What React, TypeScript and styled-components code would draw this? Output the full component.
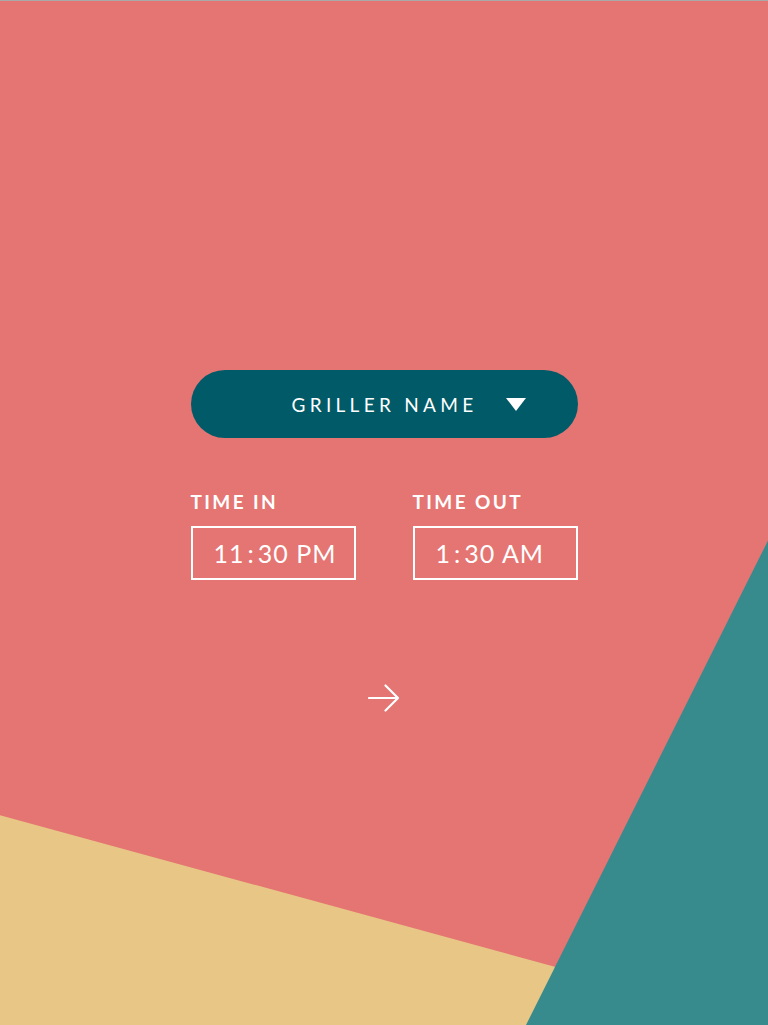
import React from "react";
import styled, { createGlobalStyle } from "styled-components";

const GlobalStyle = createGlobalStyle`
  html, body {
    margin: 0;
    padding: 0;
  }
  body {
    font-family: Lato, "Open Sans", sans-serif;
    background: #e57572;
  }
`;

const Screen = styled.div`
  position: relative;
  width: 768px;
  height: 1025px;
  overflow: hidden;
  background: #e57572;
  border-top: 1px solid #a8a8a8;
  box-sizing: border-box;
`;

const Backdrop = styled.svg`
  position: absolute;
  inset: 0;
  width: 100%;
  height: 100%;
`;

const Content = styled.div`
  position: relative;
  width: 387px;
  margin: 0 auto;
  padding-top: 369px;
  display: flex;
  flex-direction: column;
`;

const Select = styled.button`
  height: 68px;
  width: 100%;
  border: none;
  border-radius: 34px;
  background: #005a68;
  color: #fff;
  display: flex;
  align-items: center;
  justify-content: flex-end;
  gap: 28px;
  padding: 0 52px 0 0;
  font-family: Lato, sans-serif;
  font-size: 19px;
  font-weight: 400;
  letter-spacing: 4.3px;
  cursor: pointer;
`;

const Caret = styled.span`
  width: 0;
  height: 0;
  border-left: 10.5px solid transparent;
  border-right: 10.5px solid transparent;
  border-top: 13px solid #fff;
`;

const TimeRow = styled.div`
  display: flex;
  justify-content: space-between;
  margin-top: 52px;
`;

const Field = styled.div`
  display: flex;
  flex-direction: column;
  width: 165px;
`;

const Label = styled.div`
  color: #fff;
  font-size: 19px;
  font-weight: 700;
  letter-spacing: 2.4px;
  line-height: 24px;
`;

const TimeBox = styled.div<{ $indent: number }>`
  margin-top: 12px;
  height: 54px;
  border: 2px solid #fff;
  box-sizing: border-box;
  display: flex;
  align-items: center;
  padding-left: ${(p) => p.$indent}px;
  color: #fff;
  font-size: 25px;
  font-weight: 400;
  letter-spacing: 1px;
`;

const Colon = styled.span`
  margin: 0 3px;
`;

const Next = styled.button`
  align-self: center;
  margin-top: 104px;
  background: none;
  border: none;
  padding: 0;
  display: flex;
  cursor: pointer;
`;

const Time = ({ h, m, ap }: { h: string; m: string; ap: string }) => (
  <>
    {h}
    <Colon>:</Colon>
    {m}&nbsp;{ap}
  </>
);

export default function App() {
  return (
    <>
      <GlobalStyle />
      <Screen>
        <Backdrop viewBox="0 0 768 1025" preserveAspectRatio="none">
          <polygon points="0,815 768,1025 0,1025" fill="#e8c786" />
          <polygon points="768,540 768,1025 526,1025" fill="#388b8c" />
        </Backdrop>
        <Content>
          <Select>
            GRILLER NAME
            <Caret />
          </Select>
          <TimeRow>
            <Field>
              <Label>TIME IN</Label>
              <TimeBox $indent={21}>
                <Time h="11" m="30" ap="PM" />
              </TimeBox>
            </Field>
            <Field>
              <Label>TIME OUT</Label>
              <TimeBox $indent={21}>
                <Time h="1" m="30" ap="AM" />
              </TimeBox>
            </Field>
          </TimeRow>
          <Next aria-label="next">
            <svg width="32" height="28" viewBox="0 0 32 28" fill="none">
              <path
                d="M1 14 H30 M17.5 1.5 L30 14 L17.5 26.5"
                stroke="#fff"
                strokeWidth="2.2"
                strokeLinecap="round"
                strokeLinejoin="round"
              />
            </svg>
          </Next>
        </Content>
      </Screen>
    </>
  );
}
